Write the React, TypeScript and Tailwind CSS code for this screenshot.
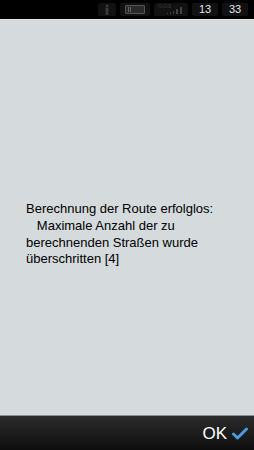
const App = () => {
  return (
    <div className="w-[254px] h-[450px] flex flex-col bg-[#d5dadc] overflow-hidden" style={{ fontFamily: '"Liberation Sans", Arial, sans-serif' }}>
      {/* status bar */}
      <div className="h-[19px] bg-black flex items-center justify-end gap-[4px] pr-[6px] shrink-0">
        <div className="w-[18px] h-[13px] rounded-[2px] bg-[#111] flex items-center justify-center">
          <svg width="6" height="11" viewBox="0 0 6 11">
            <circle cx="3" cy="2" r="1.5" fill="#3a3a3a" />
            <rect x="1.5" y="4" width="3" height="4" fill="#3a3a3a" />
            <circle cx="3" cy="9.5" r="1.5" fill="#3a3a3a" />
          </svg>
        </div>
        <div className="w-[30px] h-[13px] rounded-[2px] bg-[#111] flex items-center justify-center">
          <div className="w-[20px] h-[9px] border border-[#555] rounded-[1px] bg-[#2a2a2a] flex items-center px-[2px] gap-[1px]">
            <div className="w-[1px] h-[5px] bg-[#666]" />
            <div className="w-[1px] h-[5px] bg-[#666]" />
          </div>
        </div>
        <div className="w-[34px] h-[13px] rounded-[2px] bg-[#111] relative">
          <span className="absolute left-[4px] top-[0px] text-[6px] leading-[7px] text-[#3a3a3a]">GGS</span>
          <div className="absolute right-[6px] bottom-[2px] flex items-end gap-[2px]">
            <div className="w-[1px] h-[1px] bg-[#444]" />
            <div className="w-[1px] h-[2px] bg-[#444]" />
            <div className="w-[1px] h-[3px] bg-[#444]" />
            <div className="w-[2px] h-[5px] bg-[#444]" />
            <div className="w-[2px] h-[7px] bg-[#444]" />
          </div>
        </div>
        <div className="w-[26px] h-[13px] rounded-[2px] bg-[#111] flex items-center justify-center text-[11px] text-[#e6e6e6]">13</div>
        <div className="w-[26px] h-[13px] rounded-[2px] bg-[#111] flex items-center justify-center text-[11px] text-[#e6e6e6]">33</div>
      </div>
      <div className="h-[1px] bg-[#e3e7e9] shrink-0" />

      {/* message */}
      <div className="flex-1 flex items-center px-[26px] pt-[34px]">
        <p className="text-[13px] leading-[16.6px] text-black whitespace-pre-wrap">
          {"Berechnung der Route erfolglos:\n   Maximale Anzahl der zu\nberechnenden Straßen wurde\nüberschritten [4]"}
        </p>
      </div>

      {/* bottom bar */}
      <div className="h-[1px] bg-[#8c8f90] shrink-0" />
      <div className="h-[34px] shrink-0 bg-gradient-to-b from-[#2c2c2c] to-[#0e0e0e] flex items-center justify-end pr-[6px] gap-[5px]">
        <span className="text-[17px] text-white leading-none">OK</span>
        <svg width="16" height="13" viewBox="0 0 16 13">
          <path d="M1.5 7 L5.5 11 L14.5 2" fill="none" stroke="#4a9be0" strokeWidth="3" strokeLinecap="round" strokeLinejoin="round" />
        </svg>
      </div>
    </div>
  );
};

export default App;
